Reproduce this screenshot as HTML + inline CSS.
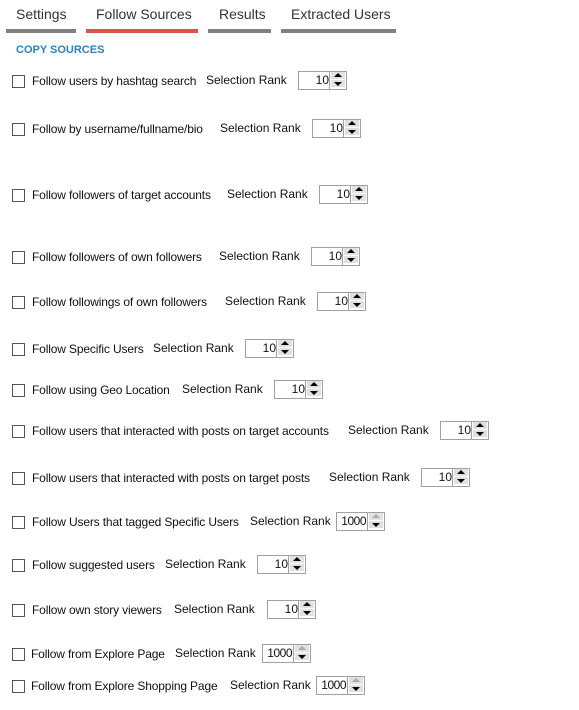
<!DOCTYPE html>
<html><head><style>
body{margin:0;width:579px;height:710px;background:#fff;font-family:"Liberation Sans",sans-serif;position:relative;overflow:hidden;color:#111}
.a{position:absolute;white-space:nowrap}
.tab{font-size:14px;color:#333;top:6px}
.bar{position:absolute;top:29px;height:4px;background:#808080}
.cb{position:absolute;left:12px;width:11px;height:11px;border:1px solid #555;background:#fff}
.t{font-size:12px}
.lb{font-size:12px;letter-spacing:-0.15px}
.box{position:absolute;height:17px;border:1px solid #a0a0a0;background:#fff}
.box .v{position:absolute;right:17px;top:1px;font-size:12px}
.sp{position:absolute;right:0;top:0;width:16px;height:17px;border-left:1px solid #a0a0a0}
.sp div{height:7px;margin:0 0 1px 1px;width:14px;background:#e1e1e1;border:0;position:relative}
.sp div:after{content:"";position:absolute;left:3px;border-left:4px solid transparent;border-right:4px solid transparent}
.up:after{top:1px;border-bottom:4px solid #000}
.dn:after{top:2px;border-top:4px solid #000}
.dis .up:after{border-bottom-color:#aaa}
</style></head><body>
<div class="a tab" style="left:16px">Settings</div>
<div class="a tab" style="left:96px">Follow Sources</div>
<div class="a tab" style="left:219px">Results</div>
<div class="a tab" style="left:291px">Extracted Users</div>
<div class="bar" style="left:6px;width:70px"></div>
<div class="bar" style="left:86px;width:112px;background:#d9534f"></div>
<div class="bar" style="left:208px;width:63px"></div>
<div class="bar" style="left:281px;width:115px"></div>
<div class="a" style="left:16px;top:44px;font-size:11px;font-weight:bold;color:#2a82c0">COPY SOURCES</div>
<div id="rows"></div>
<script>
var r=[
[81,"Follow users by hashtag search",206,298,"10"],
[129,"Follow by username/fullname/bio",220,312,"10"],
[195,"Follow followers of target accounts",227,319,"10"],
[257,"Follow followers of own followers",219,311,"10"],
[302,"Follow followings of own followers",225,317,"10"],
[349,"Follow Specific Users",153,245,"10"],
[390,"Follow using Geo Location",182,274,"10"],
[431,"Follow users that interacted with posts on target accounts",348,440,"10"],
[478,"Follow users that interacted with posts on target posts",329,421,"10"],
[522,"Follow Users that tagged Specific Users",250,336,"1000"],
[565,"Follow suggested users",165,257,"10"],
[610,"Follow own story viewers",174,267,"10"],
[654,"Follow from Explore Page",175,262,"1000"],
[686,"Follow from Explore Shopping Page",230,316,"1000"]];
var h="";
r.forEach(function(x,i){var y=x[0],lx=i>11?31:32,big=x[4]=="1000";
h+='<div class="cb" style="top:'+(y-6)+'px"></div>';
h+='<div class="a lb" style="left:'+lx+'px;top:'+(y-7)+'px">'+x[1]+'</div>';
h+='<div class="a t" style="left:'+x[2]+'px;top:'+(y-8)+'px">Selection Rank</div>';
h+='<div class="box'+(big?' dis':'')+'" style="left:'+x[3]+'px;top:'+(y-10)+'px;width:47px"><span class="v"'+(big?' style="right:18px;letter-spacing:-0.5px"':'')+'>'+x[4]+'</span><div class="sp"><div class="up"></div><div class="dn"></div></div></div>';
});
document.getElementById("rows").innerHTML=h;
</script>
</body></html>
